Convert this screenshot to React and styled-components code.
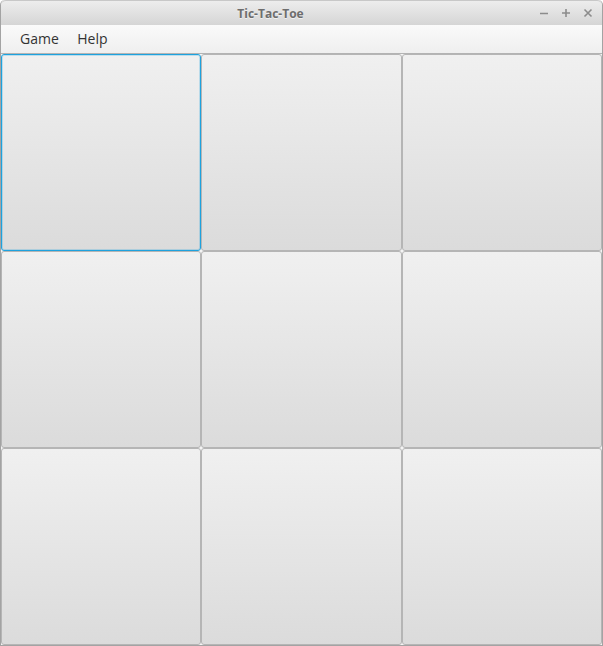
import React, { useState } from "react";
import styled, { createGlobalStyle } from "styled-components";

const GlobalStyle = createGlobalStyle`
    html, body {
        margin: 0;
        padding: 0;
        background: #ffffff;
    }
    body {
        font-family: "Open Sans", "Noto Sans", sans-serif;
    }
`;

const Window = styled.div`
    width: 603px;
    height: 646px;
    box-sizing: border-box;
    display: flex;
    flex-direction: column;
    border: 1px solid #a3a3a3;
    border-top: none;
    border-radius: 5px 5px 0 0;
    background: #f4f4f4;
    overflow: hidden;
`;

const TitleBar = styled.div`
    height: 25px;
    flex: 0 0 25px;
    display: flex;
    align-items: center;
    justify-content: center;
    padding-right: 62px;
    position: relative;
    background: linear-gradient(#ededed, #d5d5d5);
    border-top: 1px solid #c8c8c8;
    border-radius: 5px 5px 0 0;
    box-sizing: border-box;
`;

const Title = styled.span`
    font-size: 12px;
    font-weight: 700;
    color: #6d6d6d;
    text-shadow: 0 1px 0 rgba(255, 255, 255, 0.6);
`;

const Controls = styled.div`
    position: absolute;
    right: 9px;
    top: 0;
    height: 100%;
    display: flex;
    align-items: center;
    gap: 12px;
`;

const ControlIcon = styled.svg`
    width: 10px;
    height: 10px;
    stroke: #8c8c8c;
    stroke-width: 1.6;
    fill: none;
`;

const MenuBar = styled.div`
    height: 29px;
    flex: 0 0 29px;
    display: flex;
    align-items: center;
    padding-left: 10px;
    background: linear-gradient(#fafafa, #efefef);
    border-bottom: 1px solid #b3b3b3;
    box-sizing: border-box;
`;

const MenuItem = styled.div`
    font-size: 14px;
    color: #333333;
    padding: 0 9.5px 0 9px;
    line-height: 28px;
`;

const Board = styled.div`
    flex: 1;
    display: grid;
    grid-template-columns: repeat(3, 1fr);
    grid-template-rows: repeat(3, 1fr);
    background: #f4f4f4;
`;

const Cell = styled.button`
    margin: 0;
    padding: 0;
    border: 1px solid ${(props) => (props.$focused ? "#1ea2de" : "#b5b5b5")};
    border-radius: 3px;
    background: linear-gradient(#f0f0f0, #dbdbdb);
    box-shadow: ${(props) =>
        props.$focused ? "inset 0 0 0 1px rgba(30, 162, 222, 0.25)" : "none"};
    font-family: "Open Sans", sans-serif;
    font-size: 64px;
    color: #333;
    outline: none;
    cursor: pointer;
`;

const App = () => {
    const [cells] = useState(Array(9).fill(""));
    const [focused, setFocused] = useState(0);

    return (
        <>
            <GlobalStyle />
            <Window>
                <TitleBar>
                    <Title>Tic-Tac-Toe</Title>
                    <Controls>
                        <ControlIcon viewBox="0 0 10 10">
                            <path d="M1 5.5h8" />
                        </ControlIcon>
                        <ControlIcon viewBox="0 0 10 10">
                            <path d="M1 5h8M5 1v8" />
                        </ControlIcon>
                        <ControlIcon viewBox="0 0 10 10">
                            <path d="M1.5 1.5l7 7M8.5 1.5l-7 7" />
                        </ControlIcon>
                    </Controls>
                </TitleBar>
                <MenuBar>
                    <MenuItem>Game</MenuItem>
                    <MenuItem>Help</MenuItem>
                </MenuBar>
                <Board>
                    {cells.map((c, i) => (
                        <Cell
                            key={i}
                            $focused={focused === i}
                            onClick={() => setFocused(i)}
                        >
                            {c}
                        </Cell>
                    ))}
                </Board>
            </Window>
        </>
    );
};

export default App;
